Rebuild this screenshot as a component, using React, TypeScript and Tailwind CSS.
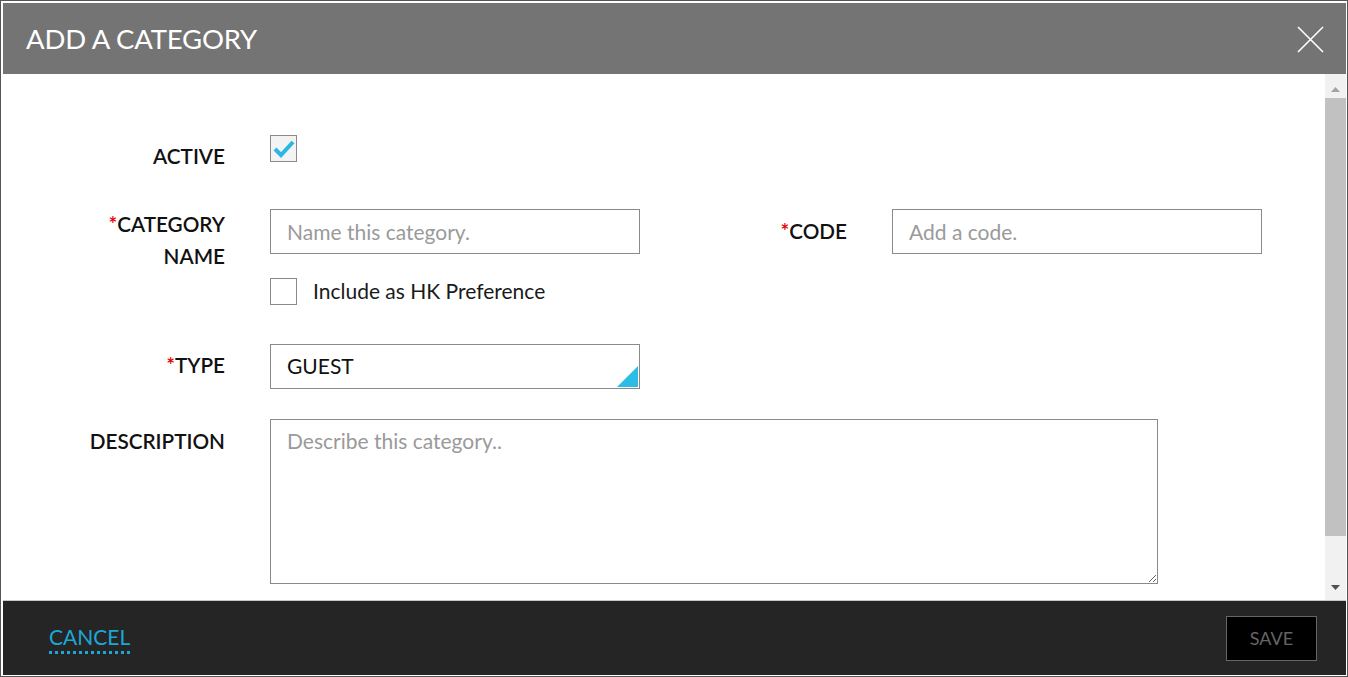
import React from 'react';

const font = { fontFamily: 'Lato, "Open Sans", sans-serif' };

const Label = ({ children, required }: { children: React.ReactNode; required?: boolean }) => (
    <div className="w-[222px] shrink-0 text-right text-[20.7px] leading-[32px] font-semibold text-[#111] uppercase">
        {required && <span className="text-[#e00000]">*</span>}
        {children}
    </div>
);

export default function App() {
    return (
        <div style={font} className="w-[1348px] h-[677px] bg-white border border-[#555] pt-[2px] pl-[2px] pr-[1px] pb-[1px] flex flex-col overflow-hidden">
            {/* HEADER */}
            <div className="h-[71px] shrink-0 bg-[#747474] flex items-center justify-between pl-[23px] pr-[22px]">
                <h1 className="text-white text-[27.5px] tracking-[-0.2px] font-normal">ADD A CATEGORY</h1>
                <svg width="27" height="27" viewBox="0 0 27 27" className="mt-[1px]">
                    <path d="M1 1 L26 26 M26 1 L1 26" stroke="#fff" strokeWidth="1.6" />
                </svg>
            </div>

            {/* BODY */}
            <div className="flex flex-1 min-h-0">
                <div className="flex-1 pt-[61px] flex flex-col">
                    {/* Active */}
                    <div className="flex items-start">
                        <div className="pt-[5px]"><Label>Active</Label></div>
                        <div className="ml-[45px] w-[27px] h-[27px] border border-[#8a8a8a] bg-[#f3f3f3] flex items-center justify-center">
                            <svg width="22" height="20" viewBox="0 0 22 20">
                                <path d="M2 10 L8 16 L20 3" fill="none" stroke="#2ab7e3" strokeWidth="4" strokeLinejoin="miter" />
                            </svg>
                        </div>
                    </div>

                    {/* Category name + code */}
                    <div className="flex items-start mt-[37px]">
                        <div className="-mt-[1px]"><Label required>Category<br />Name</Label></div>
                        <div className="ml-[45px] flex flex-col">
                            <input
                                placeholder="Name this category."
                                className="w-[370px] h-[45px] border border-[#8a8a8a] px-4 text-[21px] text-[#111] placeholder:text-[#9a9a9a] outline-none"
                            />
                            <label className="flex items-center mt-[23px]">
                                <span className="w-[27px] h-[27px] border border-[#8a8a8a] bg-white" />
                                <span className="ml-[16px] text-[21px] text-[#1a1a1a] -mt-[2px]">Include as HK Preference</span>
                            </label>
                        </div>
                        <div className="w-[207px] shrink-0 text-right text-[20.7px] leading-[32px] font-semibold text-[#111] mt-[6px]">
                            <span className="text-[#e00000]">*</span>CODE
                        </div>
                        <input
                            placeholder="Add a code."
                            className="ml-[45px] w-[370px] h-[45px] border border-[#8a8a8a] px-4 text-[21px] text-[#111] placeholder:text-[#9a9a9a] outline-none"
                        />
                    </div>

                    {/* Type */}
                    <div className="flex items-start mt-[37px]">
                        <div className="pt-[5px]"><Label required>Type</Label></div>
                        <div className="ml-[45px] relative w-[370px] h-[45px] border border-[#8a8a8a] px-4 flex items-center text-[21px] text-[#111]">
                            GUEST
                            <svg width="21" height="21" viewBox="0 0 21 21" className="absolute right-[1px] bottom-[1px]">
                                <path d="M21 0 L21 21 L0 21 Z" fill="#2bbde6" />
                            </svg>
                        </div>
                    </div>

                    {/* Description */}
                    <div className="flex items-start mt-[30px]">
                        <div className="pt-[6px]"><Label>Description</Label></div>
                        <textarea
                            placeholder="Describe this category.."
                            className="ml-[45px] w-[888px] h-[165px] border border-[#8a8a8a] px-4 pt-[8px] text-[21px] leading-[26px] text-[#111] placeholder:text-[#9a9a9a] outline-none"
                        />
                    </div>
                </div>

                {/* Scrollbar */}
                <div className="w-[21px] shrink-0 bg-[#f1f1f1] flex flex-col items-center">
                    <svg width="21" height="24" viewBox="0 0 21 24">
                        <path d="M6 18 L10.5 13 L15 18 Z" fill="#a3a3a3" />
                    </svg>
                    <div className="w-[21px] flex-1 bg-[#c1c1c1] mb-[40px]" />
                    <svg width="21" height="24" viewBox="0 0 21 24">
                        <path d="M6 9 L10.5 14 L15 9 Z" fill="#505050" />
                    </svg>
                </div>
            </div>

            {/* FOOTER */}
            <div className="h-[75px] shrink-0 bg-[#252525] border-t border-[#c8c8c8] flex items-center justify-between pl-[45px] pr-[29px]">
                <button className="text-[#1ba8d6] text-[21px] leading-[24px] border-b-[3px] border-dotted border-[#1ba8d6] pb-[2px] mt-[2px] ml-[1px]">
                    CANCEL
                </button>
                <button className="w-[91px] h-[45px] bg-black border border-[#666] text-[#656565] text-[18px]">
                    SAVE
                </button>
            </div>
        </div>
    );
}
